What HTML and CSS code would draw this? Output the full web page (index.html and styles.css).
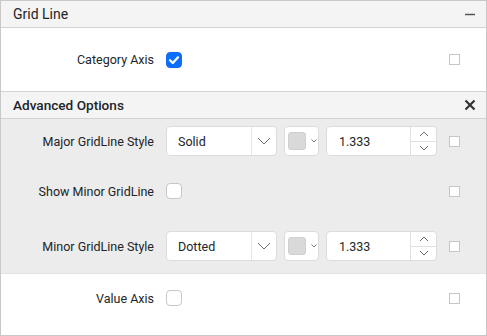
FILE: index.html
```html
<!DOCTYPE html>
<html lang="en">
<head>
    <meta charset="UTF-8">
    <meta name="viewport" content="width=device-width, initial-scale=1.0">
    <title>Grid Line</title>
    <link rel="stylesheet" href="styles.css">
</head>
<body>
    <div class="panel">
        <div class="section-header">
            <span class="header-title">Grid Line</span>
            <svg class="header-icon" width="12" height="12" viewBox="0 0 12 12">
                <line x1="1" y1="6.5" x2="11" y2="6.5" stroke="#555" stroke-width="1.5"/>
            </svg>
        </div>

        <div class="row main-row">
            <div class="label">Category Axis</div>
            <span class="checkbox checked">
                <svg width="16" height="16" viewBox="0 0 16 16">
                    <polyline points="4,8.2 6.8,11 12,5.2" fill="none" stroke="#fff" stroke-width="2.2" stroke-linecap="round" stroke-linejoin="round"/>
                </svg>
            </span>
            <span class="mini-box"></span>
        </div>

        <div class="section-header advanced-header">
            <span class="header-title bold">Advanced Options</span>
            <svg class="header-icon" width="12" height="12" viewBox="0 0 12 12">
                <path d="M1.5 1.5 L10.5 10.5 M10.5 1.5 L1.5 10.5" stroke="#333" stroke-width="2.2"/>
            </svg>
        </div>

        <div class="advanced">
            <div class="row adv-row first">
                <div class="label">Major GridLine Style</div>
                <div class="controls">
                    <div class="dropdown">
                        <span class="dropdown-text">Solid</span>
                        <span class="dropdown-btn">
                            <svg width="14" height="8" viewBox="0 0 14 8"><polyline points="1,1 7,7 13,1" fill="none" stroke="#6c6c6c" stroke-width="1"/></svg>
                        </span>
                    </div>
                    <div class="color-picker">
                        <span class="swatch"></span>
                        <svg width="6" height="4" viewBox="0 0 6 4"><polyline points="0.5,0.5 3,3 5.5,0.5" fill="none" stroke="#6c6c6c" stroke-width="0.9"/></svg>
                    </div>
                    <div class="numeric">
                        <span class="numeric-text">1.333</span>
                        <span class="spin">
                            <span class="spin-btn"><svg width="10" height="6" viewBox="0 0 10 6"><polyline points="1,5 5,1 9,5" fill="none" stroke="#6c6c6c" stroke-width="1"/></svg></span>
                            <span class="spin-btn down"><svg width="10" height="6" viewBox="0 0 10 6"><polyline points="1,1 5,5 9,1" fill="none" stroke="#6c6c6c" stroke-width="1"/></svg></span>
                        </span>
                    </div>
                </div>
                <span class="mini-box"></span>
            </div>

            <div class="row adv-row second">
                <div class="label">Show Minor GridLine</div>
                <span class="checkbox"></span>
                <span class="mini-box"></span>
            </div>

            <div class="row adv-row">
                <div class="label">Minor GridLine Style</div>
                <div class="controls">
                    <div class="dropdown">
                        <span class="dropdown-text">Dotted</span>
                        <span class="dropdown-btn">
                            <svg width="14" height="8" viewBox="0 0 14 8"><polyline points="1,1 7,7 13,1" fill="none" stroke="#6c6c6c" stroke-width="1"/></svg>
                        </span>
                    </div>
                    <div class="color-picker">
                        <span class="swatch"></span>
                        <svg width="6" height="4" viewBox="0 0 6 4"><polyline points="0.5,0.5 3,3 5.5,0.5" fill="none" stroke="#6c6c6c" stroke-width="0.9"/></svg>
                    </div>
                    <div class="numeric">
                        <span class="numeric-text">1.333</span>
                        <span class="spin">
                            <span class="spin-btn"><svg width="10" height="6" viewBox="0 0 10 6"><polyline points="1,5 5,1 9,5" fill="none" stroke="#6c6c6c" stroke-width="1"/></svg></span>
                            <span class="spin-btn down"><svg width="10" height="6" viewBox="0 0 10 6"><polyline points="1,1 5,5 9,1" fill="none" stroke="#6c6c6c" stroke-width="1"/></svg></span>
                        </span>
                    </div>
                </div>
                <span class="mini-box"></span>
            </div>
        </div>

        <div class="row value-row">
            <div class="label">Value Axis</div>
            <span class="checkbox"></span>
            <span class="mini-box"></span>
        </div>
    </div>
</body>
</html>
```

FILE: styles.css
```css
body {
    margin: 0;
    font-family: Roboto, "Liberation Sans", sans-serif;
    font-size: 12.5px;
    color: #212529;
    background: #fff;
}

.panel {
    width: 487px;
    height: 336px;
    box-sizing: border-box;
    border: 1px solid #c8c8c8;
    overflow: hidden;
}

.section-header {
    height: 26px;
    background: #f4f4f4;
    border-bottom: 1px solid #d2d2d2;
    display: flex;
    align-items: center;
    padding: 0 10px 0 12px;
}

.advanced-header {
    border-top: 1px solid #d2d2d2;
}

.header-title {
    font-size: 14px;
    color: #212529;
    flex: 1;
}

.header-title.bold {
    font-size: 13.6px;
    font-weight: 500;
}

.header-icon {
    display: block;
}

.row {
    display: flex;
    align-items: center;
}

.label {
    width: 153px;
    padding-right: 12px;
    text-align: right;
    white-space: nowrap;
    flex-shrink: 0;
}

.main-row {
    height: 63px;
}

.checkbox {
    width: 16px;
    height: 16px;
    box-sizing: border-box;
    border: 1px solid #c4c8cc;
    border-radius: 4px;
    background: #fff;
    display: block;
}

.checkbox.checked {
    background: #0d6efd;
    border-color: #0d6efd;
}

.checkbox svg {
    display: block;
    margin: -1px;
}

.mini-box {
    width: 11px;
    height: 11px;
    box-sizing: border-box;
    border: 1px solid #c6c6c6;
    background: #fff;
    margin-left: auto;
    margin-right: 26px;
}

.advanced {
    background: #ececec;
    padding: 7px 0 12px;
    border-bottom: 1px solid #e4e4e4;
}

.adv-row {
    height: 30px;
}

.adv-row.first {
    margin-bottom: 20px;
}

.adv-row.second {
    margin-bottom: 25px;
}

.controls {
    display: flex;
    gap: 7px;
}

.dropdown,
.color-picker,
.numeric {
    height: 30px;
    box-sizing: border-box;
    background: #fff;
    border: 1px solid #dcdcdc;
    border-radius: 4px;
    display: flex;
    align-items: center;
}

.dropdown {
    width: 111px;
}

.dropdown-text {
    flex: 1;
    padding-left: 11px;
}

.dropdown-btn {
    width: 24px;
    height: 100%;
    border-left: 1px solid #e6e6e6;
    display: flex;
    align-items: center;
    justify-content: center;
}

.color-picker {
    width: 35px;
    padding-left: 3px;
    gap: 5px;
}

.swatch {
    width: 18px;
    height: 18px;
    box-sizing: border-box;
    background: #d9d9d9;
    border: 1px solid #cfcfcf;
    border-radius: 3px;
}

.numeric {
    width: 111px;
}

.numeric-text {
    flex: 1;
    padding-left: 12px;
}

.spin {
    width: 25px;
    height: 100%;
    border-left: 1px solid #e0e0e0;
    display: flex;
    flex-direction: column;
}

.spin-btn {
    flex: 1;
    display: flex;
    align-items: center;
    justify-content: center;
}

.spin-btn.down {
    border-top: 1px solid #e0e0e0;
}

.value-row {
    padding-top: 16px;
}
```
